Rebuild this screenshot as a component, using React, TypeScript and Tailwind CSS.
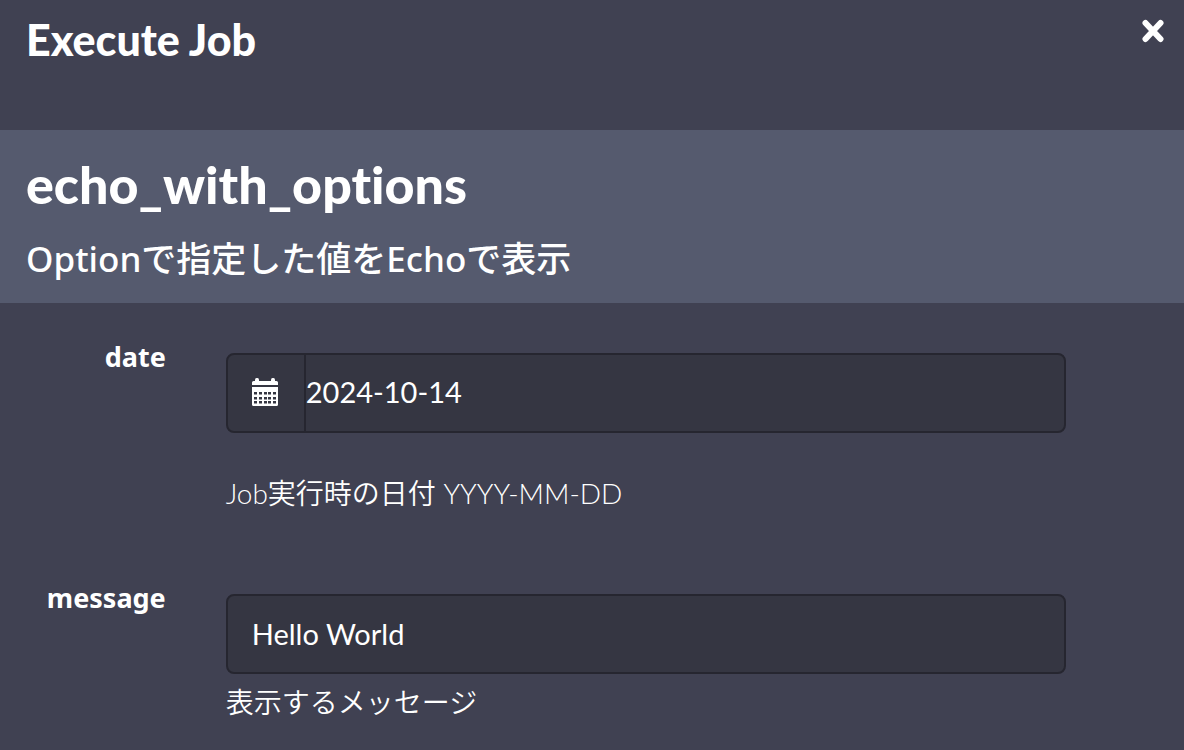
import React, { useState } from 'react';

const CalendarIcon = () => (
    <svg width="28" height="30" viewBox="0 0 28 30" fill="none" aria-hidden="true">
        <path
            fill="#fff"
            d="M1 7V4.500Q1 3 2.500 3H4V2Q4 0 5.500 0H6.500Q8 0 8 2V3H20V2Q20 0 21.500 0H22.500Q24 0 24 2V3H25.500Q27 3 27 4.500V7Z"
        />
        <path fill="#fff" d="M1 9H27V26.500Q27 28 25.500 28H2.500Q1 28 1 26.500Z" />
        {[14, 19, 23].map((y) =>
            [3, 8, 13, 17, 22].map((x) => (
                <rect key={`${x}-${y}`} x={x} y={y} width="3" height="2.500" fill="#353642" />
            ))
        )}
    </svg>
);

export default function App() {
    const [date, setDate] = useState('2024-10-14');
    const [message, setMessage] = useState('Hello World');

    return (
        <div className="min-h-screen bg-[#404152] font-['Noto_Sans','Noto_Sans_CJK_JP',sans-serif] text-white">
            <header className="flex h-[130px] items-start justify-between pl-[26px] pr-[19px] pt-4">
                <h1 className="font-[Lato,sans-serif] text-[43px] font-black leading-[48px]">Execute Job</h1>
                <button type="button" aria-label="Close" className="mt-[3px] cursor-pointer">
                    <svg width="24" height="24" viewBox="0 0 24 24" fill="none" aria-hidden="true">
                        <path d="M4.500 4L19.500 20M19.500 4L4.500 20" stroke="#fff" strokeWidth="6" strokeLinecap="round" />
                    </svg>
                </button>
            </header>

            <section className="bg-[#555a6e] px-[26px] pb-6 pt-6">
                <h2 className="font-[Lato,sans-serif] text-[52px] font-black leading-[60px] [font-variant-ligatures:none]">echo_with_options</h2>
                <p className="mt-6 text-[35px] font-medium leading-[41px]">Optionで指定した値をEchoで表示</p>
            </section>

            <form className="flex flex-col gap-[67px] pb-7 pt-9" onSubmit={(e) => e.preventDefault()}>
                <div className="flex items-start">
                    <label htmlFor="date" className="w-[14%] text-right text-[27px] font-bold leading-9">date</label>
                    <div className="ml-[60px] mt-[14px] w-[71%]">
                        <div className="flex h-20 overflow-hidden rounded-lg border-2 border-[#262630] bg-[#353642]">
                            <button type="button" aria-label="Pick a date" className="flex w-[78px] cursor-pointer items-center justify-center border-r-2 border-[#262630] pr-0.5">
                                <CalendarIcon />
                            </button>
                            <input
                                id="date"
                                type="text"
                                value={date}
                                onChange={(e) => setDate(e.target.value)}
                                className="min-w-0 flex-1 bg-transparent pb-0.5 font-[Lato,sans-serif] text-[29px] outline-none"
                            />
                        </div>
                        <p className="mt-10 font-[Lato,'Noto_Sans_CJK_JP',sans-serif] text-[28px] font-[350] leading-10">Job実行時の日付 YYYY-MM-DD</p>
                    </div>
                </div>

                <div className="flex items-start">
                    <label htmlFor="message" className="w-[14%] text-right text-[27px] font-bold leading-9">message</label>
                    <div className="ml-[60px] mt-[14px] w-[71%]">
                        <input
                            id="message"
                            type="text"
                            value={message}
                            onChange={(e) => setMessage(e.target.value)}
                            className="block h-20 w-full rounded-lg border-2 border-[#262630] bg-[#353642] px-6 pb-0.5 font-[Lato,sans-serif] text-[29px] outline-none"
                        />
                        <p className="mt-2 font-[Lato,'Noto_Sans_CJK_JP',sans-serif] text-[28px] font-[350] leading-10">表示するメッセージ</p>
                    </div>
                </div>
            </form>
        </div>
    );
}
